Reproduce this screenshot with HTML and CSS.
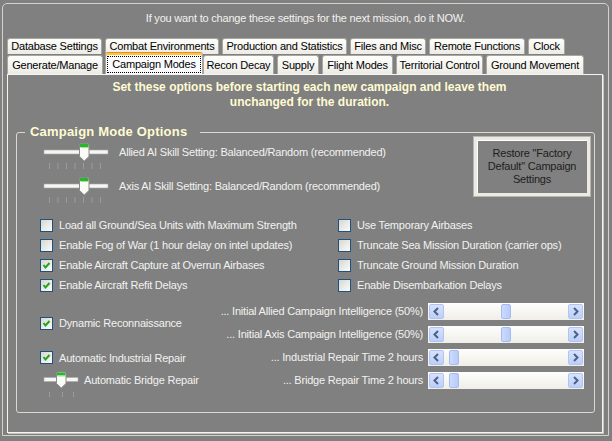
FILE: index.html
```html
<!DOCTYPE html>
<html lang="en">
<head>
    <meta charset="UTF-8">
    <meta name="viewport" content="width=device-width, initial-scale=1.0">
    <title>Campaign Modes</title>
    <link rel="stylesheet" href="styles.css">
</head>
<body>

<div class="frame">
    <p class="notice">If you want to change these settings for the next mission, do it NOW.</p>

    <div class="tabs">
        <div class="tab-row back">
            <span class="tab">Database Settings</span>
            <span class="tab">Combat Environments</span>
            <span class="tab">Production and Statistics</span>
            <span class="tab">Files and Misc</span>
            <span class="tab">Remote Functions</span>
            <span class="tab">Clock</span>
        </div>
        <div class="tab-row front">
            <span class="tab">Generate/Manage</span>
            <span class="tab active"><span class="focus">Campaign Modes</span></span>
            <span class="tab">Recon Decay</span>
            <span class="tab">Supply</span>
            <span class="tab">Flight Modes</span>
            <span class="tab">Territorial Control</span>
            <span class="tab">Ground Movement</span>
        </div>
    </div>

    <div class="panel">
        <p class="intro">Set these options before starting each new campaign and leave them<br>unchanged for the duration.</p>

        <fieldset class="group">
            <legend>Campaign Mode Options</legend>

            <div class="skills">
                <div class="skill-list">
                    <div class="skill-row">
                        <svg class="slider" width="66" height="30" viewBox="0 0 66 30">
                            <rect x="1" y="8" width="64" height="4" fill="#f6f6f4" stroke="#a9a9a4" stroke-width="0.6"/>
                            <g stroke="#9c9c9c">
                                <line x1="6.5" y1="21" x2="6.5" y2="27"/><line x1="15" y1="21" x2="15" y2="27"/>
                                <line x1="23.5" y1="21" x2="23.5" y2="27"/><line x1="32" y1="21" x2="32" y2="27"/>
                                <line x1="40.5" y1="21" x2="40.5" y2="27"/><line x1="49" y1="21" x2="49" y2="27"/>
                                <line x1="57.5" y1="21" x2="57.5" y2="27"/>
                            </g>
                            <path d="M36.5 3 Q36.5 1.5 38 1.5 L44.5 1.5 Q46 1.5 46 3 L46 14.5 L41.25 19 L36.5 14.5 Z" fill="#fbfbf8" stroke="#8b8b85"/>
                            <rect x="37" y="2" width="8.5" height="3" fill="#2cb52c"/>
                            <line x1="37.5" y1="5.5" x2="45" y2="5.5" stroke="#9fe29f"/>
                        </svg>
                        <span>Allied AI Skill Setting: Balanced/Random (recommended)</span>
                    </div>
                    <div class="skill-row">
                        <svg class="slider" width="66" height="30" viewBox="0 0 66 30">
                            <rect x="1" y="8" width="64" height="4" fill="#f6f6f4" stroke="#a9a9a4" stroke-width="0.6"/>
                            <g stroke="#9c9c9c">
                                <line x1="6.5" y1="21" x2="6.5" y2="27"/><line x1="15" y1="21" x2="15" y2="27"/>
                                <line x1="23.5" y1="21" x2="23.5" y2="27"/><line x1="32" y1="21" x2="32" y2="27"/>
                                <line x1="40.5" y1="21" x2="40.5" y2="27"/><line x1="49" y1="21" x2="49" y2="27"/>
                                <line x1="57.5" y1="21" x2="57.5" y2="27"/>
                            </g>
                            <path d="M36.5 3 Q36.5 1.5 38 1.5 L44.5 1.5 Q46 1.5 46 3 L46 14.5 L41.25 19 L36.5 14.5 Z" fill="#fbfbf8" stroke="#8b8b85"/>
                            <rect x="37" y="2" width="8.5" height="3" fill="#2cb52c"/>
                            <line x1="37.5" y1="5.5" x2="45" y2="5.5" stroke="#9fe29f"/>
                        </svg>
                        <span>Axis AI Skill Setting: Balanced/Random (recommended)</span>
                    </div>
                </div>
                <div class="restore">Restore "Factory<br>Default" Campaign<br>Settings</div>
            </div>

            <div class="checks">
                <label class="check"><span class="box"></span>Load all Ground/Sea Units with Maximum Strength</label>
                <label class="check"><span class="box"></span>Use Temporary Airbases</label>
                <label class="check"><span class="box"></span>Enable Fog of War (1 hour delay on intel updates)</label>
                <label class="check"><span class="box"></span>Truncate Sea Mission Duration (carrier ops)</label>
                <label class="check"><span class="box"><svg width="11" height="11" viewBox="0 0 11 11"><polyline points="2.5,5 4.5,7.5 8.5,3" fill="none" stroke="#22a322" stroke-width="2"/></svg></span>Enable Aircraft Capture at Overrun Airbases</label>
                <label class="check"><span class="box"></span>Truncate Ground Mission Duration</label>
                <label class="check"><span class="box"><svg width="11" height="11" viewBox="0 0 11 11"><polyline points="2.5,5 4.5,7.5 8.5,3" fill="none" stroke="#22a322" stroke-width="2"/></svg></span>Enable Aircraft Refit Delays</label>
                <label class="check"><span class="box"></span>Enable Disembarkation Delays</label>
            </div>

            <div class="lower">
                <label class="check dyn"><span class="box"><svg width="11" height="11" viewBox="0 0 11 11"><polyline points="2.5,5 4.5,7.5 8.5,3" fill="none" stroke="#22a322" stroke-width="2"/></svg></span>Dynamic Reconnaissance</label>
                <label class="check ind"><span class="box"><svg width="11" height="11" viewBox="0 0 11 11"><polyline points="2.5,5 4.5,7.5 8.5,3" fill="none" stroke="#22a322" stroke-width="2"/></svg></span>Automatic Industrial Repair</label>
                <div class="bridge">
                    <svg class="slider" width="36" height="28" viewBox="0 0 36 28">
                        <rect x="1" y="7.5" width="34" height="4" fill="#f6f6f4" stroke="#a9a9a4" stroke-width="0.6"/>
                        <g stroke="#9c9c9c">
                            <line x1="6.5" y1="22" x2="6.5" y2="27"/><line x1="19.5" y1="22" x2="19.5" y2="27"/><line x1="30.5" y1="22" x2="30.5" y2="27"/>
                        </g>
                        <path d="M13.5 3.5 Q13.5 2 15 2 L21.5 2 Q23 2 23 3.5 L23 13.5 L18.25 18 L13.5 13.5 Z" fill="#fbfbf8" stroke="#8b8b85"/>
                        <rect x="14" y="2.5" width="8.5" height="3" fill="#2cb52c"/>
                        <line x1="14.5" y1="6" x2="22" y2="6" stroke="#9fe29f"/>
                    </svg>
                    <span>Automatic Bridge Repair</span>
                </div>

                <span class="lbl">... Initial Allied Campaign Intelligence (50%)</span>
                <div class="scroll">
                    <span class="arrow"><svg width="13" height="13" viewBox="0 0 13 13"><polyline points="8,3 4.5,6.5 8,10" fill="none" stroke="#4d6185" stroke-width="2"/></svg></span>
                    <span class="track"><span class="thumb" style="margin-left: 56px"></span></span>
                    <span class="arrow"><svg width="13" height="13" viewBox="0 0 13 13"><polyline points="5,3 8.5,6.5 5,10" fill="none" stroke="#4d6185" stroke-width="2"/></svg></span>
                </div>
                <span class="lbl">... Initial Axis Campaign Intelligence (50%)</span>
                <div class="scroll">
                    <span class="arrow"><svg width="13" height="13" viewBox="0 0 13 13"><polyline points="8,3 4.5,6.5 8,10" fill="none" stroke="#4d6185" stroke-width="2"/></svg></span>
                    <span class="track"><span class="thumb" style="margin-left: 56px"></span></span>
                    <span class="arrow"><svg width="13" height="13" viewBox="0 0 13 13"><polyline points="5,3 8.5,6.5 5,10" fill="none" stroke="#4d6185" stroke-width="2"/></svg></span>
                </div>
                <span class="lbl">... Industrial Repair Time 2 hours</span>
                <div class="scroll">
                    <span class="arrow"><svg width="13" height="13" viewBox="0 0 13 13"><polyline points="8,3 4.5,6.5 8,10" fill="none" stroke="#4d6185" stroke-width="2"/></svg></span>
                    <span class="track"><span class="thumb" style="margin-left: 4px"></span></span>
                    <span class="arrow"><svg width="13" height="13" viewBox="0 0 13 13"><polyline points="5,3 8.5,6.5 5,10" fill="none" stroke="#4d6185" stroke-width="2"/></svg></span>
                </div>
                <span class="lbl">... Bridge Repair Time 2 hours</span>
                <div class="scroll">
                    <span class="arrow"><svg width="13" height="13" viewBox="0 0 13 13"><polyline points="8,3 4.5,6.5 8,10" fill="none" stroke="#4d6185" stroke-width="2"/></svg></span>
                    <span class="track"><span class="thumb" style="margin-left: 4px"></span></span>
                    <span class="arrow"><svg width="13" height="13" viewBox="0 0 13 13"><polyline points="5,3 8.5,6.5 5,10" fill="none" stroke="#4d6185" stroke-width="2"/></svg></span>
                </div>
            </div>
        </fieldset>
    </div>
</div>

</body>
</html>
```

FILE: styles.css
```css
body {
    margin: 0;
    background-color: #808080;
    font-family: "Liberation Sans", Arial, sans-serif;
    font-size: 11px;
    letter-spacing: -0.2px;
    color: #f2f2f0;
}

.frame {
    box-sizing: border-box;
    width: 607px;
    height: 433px;
    margin: 3px 0 0 2px;
    border: 1px solid #d4d2ca;
    border-radius: 5px 5px 0 0;
}

.notice {
    margin: 7px 0 13px;
    line-height: 14px;
    text-align: center;
}

/* tab strip, two rows */
.tabs {
    margin-left: 4px;
}

.tab-row {
    display: flex;
    gap: 3px;
}

.back {
    height: 17px;
}

.front {
    height: 19px;
}

.tab {
    box-sizing: border-box;
    height: 16px;
    border: 1px solid #a9a8a0;
    border-bottom: 0;
    border-radius: 3px 3px 0 0;
    background: linear-gradient(#fefefc, #ecebe5);
    color: #000;
    text-align: center;
    line-height: 15px;
    white-space: nowrap;
}

.back .tab:nth-child(1) { width: 95px; }
.back .tab:nth-child(2) { width: 114px; }
.back .tab:nth-child(3) { width: 125px; }
.back .tab:nth-child(4) { width: 76px; }
.back .tab:nth-child(5) { width: 96px; }
.back .tab:nth-child(6) { width: 37px; }

.front .tab {
    height: 19px;
    line-height: 18px;
}

.front .tab:nth-child(1) { width: 96px; }
.front .tab:nth-child(2) { width: 98px; }
.front .tab:nth-child(3) { width: 71px; }
.front .tab:nth-child(4) { width: 42px; }
.front .tab:nth-child(5) { width: 71px; }
.front .tab:nth-child(6) { width: 87px; }
.front .tab:nth-child(7) { width: 98px; }

.front .tab.active {
    height: 22px;
    margin: -3px -3px 0 -1px;
    padding: 2px 1px 0;
    border-top: 1px solid #e68b2c;
    box-shadow: inset 0 2px 0 #ffc43c;
    background: #fcfcfe;
    position: relative;
}

.focus {
    display: block;
    height: 17px;
    margin-top: 1px;
    border: 1px dotted #000;
    box-sizing: border-box;
    line-height: 15px;
}

.panel {
    box-sizing: border-box;
    width: 596px;
    height: 359px;
    margin-left: 4px;
    border: 1px solid #f4f4f0;
    box-shadow: 1px 1px 0 #c6c4bb;
}

.intro {
    margin: 0;
    padding: 5px 0 0 9px;
    text-align: center;
    font-size: 12px;
    font-weight: bold;
    letter-spacing: 0;
    line-height: 15px;
    color: #fffbd2;
}

.group {
    width: 579px;
    box-sizing: border-box;
    margin: 16px 0 0 8px;
    padding: 0;
    border: 1px solid #dad8d0;
    border-radius: 3px;
}

.group legend {
    margin-left: 8px;
    padding: 0 13px 0 5px;
    font-size: 13px;
    font-weight: bold;
    letter-spacing: 0.2px;
    line-height: 12px;
    color: #fffbd2;
}

.skills {
    display: flex;
    justify-content: space-between;
    padding: 4px 4px 0 26px;
}

.skill-row {
    display: flex;
    align-items: flex-start;
    gap: 10px;
    height: 34px;
    line-height: 20px;
}

.slider {
    display: block;
    flex: none;
}

.restore {
    box-sizing: border-box;
    width: 116px;
    height: 59px;
    margin-top: -5px;
    border: 3px solid #ebeae3;
    box-shadow: inset 1px 1px 0 #fff, 0 0 0 1px #b8b6ae;
    display: flex;
    align-items: center;
    justify-content: center;
    text-align: center;
    line-height: 13px;
    color: #1e1e1e;
}

.checks {
    display: grid;
    grid-template-columns: 298px 1fr;
    grid-auto-rows: 20px;
    margin-top: 5px;
    padding-left: 23px;
}

.check {
    display: flex;
    align-items: center;
    gap: 6px;
    white-space: nowrap;
}

.box {
    box-sizing: border-box;
    width: 13px;
    height: 13px;
    flex: none;
    border: 1px solid #1c5180;
    background: linear-gradient(135deg, #d8d8d2, #fbfbf9);
}

.box svg {
    display: block;
}

.lower {
    display: grid;
    grid-template-columns: 1fr auto 156px;
    grid-template-rows: repeat(4, 17px);
    row-gap: 6px;
    column-gap: 5px;
    margin-top: 8px;
    padding: 0 10px 23px 23px;
}

.dyn {
    grid-column: 1;
    grid-row: 1 / span 2;
    align-self: center;
}

.ind {
    grid-column: 1;
    grid-row: 3;
}

.bridge {
    grid-column: 1;
    grid-row: 4;
    display: flex;
    align-items: flex-start;
    gap: 5px;
    margin: -2px 0 0 3px;
    line-height: 20px;
}

.lbl {
    grid-column: 2;
    text-align: right;
    line-height: 17px;
    white-space: nowrap;
}

.scroll {
    grid-column: 3;
    display: flex;
    height: 17px;
    background: linear-gradient(#fefefd, #efeee8);
}

.arrow {
    box-sizing: border-box;
    width: 15px;
    height: 15px;
    margin: 1px;
    border: 1px solid #b2c5f2;
    border-radius: 2px;
    background: linear-gradient(#d6e2fe, #bccff9);
}

.arrow svg {
    display: block;
}

.track {
    flex: 1;
    display: flex;
}

.thumb {
    box-sizing: border-box;
    width: 10px;
    margin: 1px 0;
    border: 1px solid #a6bbee;
    border-radius: 2px;
    background: linear-gradient(90deg, #cbdafe, #b8cbf8);
}
```
